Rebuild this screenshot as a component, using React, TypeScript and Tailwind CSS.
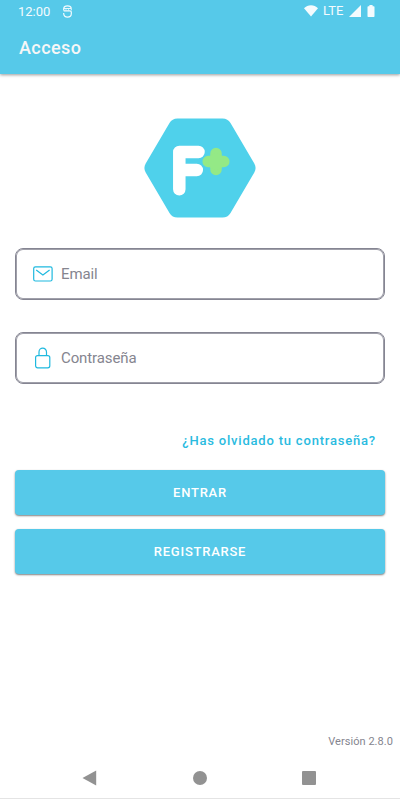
import type { ReactNode } from "react";

function StatusBar() {
  return (
    <div className="flex h-[22px] items-center justify-between pl-[18px] pr-[25px] text-[#f4fbfe]">
      <div className="flex items-center">
        <span className="w-[45px] pt-px text-[13px] leading-[22px]">12:00</span>
        <svg width="9" height="13" viewBox="0 0 9 13" fill="none" stroke="currentColor">
          <path d="M.7 5.600V3.500C.9 1.800 2.300.8 4.500.8s3.600 1 3.800 2.700M.7 5.900h6.100c.9 0 1.500.4 1.500 1.200v1.700c0 2-1.600 3.300-3.800 3.300S.7 10.800.7 8.800v-.9" strokeWidth="1.200" />
          <path d="M1 3.500h7.300v1.800M3 4.300v1M5.500 4.300v1" strokeWidth=".9" />
        </svg>
      </div>
      <div className="flex items-center">
        <svg width="14" height="12" viewBox="0 0 14 12" fill="currentColor">
          <path d="M7 11.600 0 3.300C2 1.200 4.300.2 7 .2s5 1 7 3.100z" />
        </svg>
        <span className="ml-[5px] w-[22px] text-[13px] leading-[22px]">LTE</span>
        <svg className="ml-1" width="12" height="12" viewBox="0 0 12 12" fill="currentColor">
          <path d="M12 0v12H0z" />
        </svg>
        <svg className="ml-[6px]" width="8" height="12" viewBox="0 0 8 12" fill="currentColor">
          <path d="M2.400 0h3.200v1.200h1.200c.4 0 .7.3.7.7v9.400c0 .4-.3.7-.7.7H1.200c-.4 0-.7-.3-.7-.7V1.900c0-.4.3-.7.7-.7h1.200z" />
        </svg>
      </div>
    </div>
  );
}

function Logo() {
  return (
    <svg width="112" height="100" viewBox="0 0 112 100">
      <path
        d="M33.500.5h45c3.600 0 6.200 1.500 8 4.600l23.800 40.400c1.700 3 1.700 6 0 9L86.500 94.900c-1.800 3.100-4.400 4.600-8 4.600h-45c-3.600 0-6.200-1.500-8-4.600L1.700 54.500c-1.700-3-1.700-6 0-9L25.500 5.100c1.800-3.100 4.400-4.600 8-4.600z"
        fill="#4fd1eb"
      />
      <path
        d="M35.300 34h19.200M35.300 52h17.500M35.300 34v37.300"
        fill="none"
        stroke="#fff"
        strokeWidth="12.500"
        strokeLinecap="round"
        strokeLinejoin="round"
      />
      <path d="M72 35.500v16M64.200 43.500h15.600" stroke="#94e986" strokeWidth="11.500" strokeLinecap="round" />
      <circle cx="72" cy="43.500" r="8" fill="#94e986" />
    </svg>
  );
}

function Field({ icon, label }: { icon: ReactNode; label: string }) {
  return (
    <div className="flex h-[52px] items-center rounded-[8px] border border-[#858592] pl-[17px] shadow-[inset_0_0_0_1px_#a0a0aa]">
      <div className="flex w-[28px] items-center">{icon}</div>
      <span className="text-[15px] leading-5 tracking-[-0.1px] text-[#85858f]">{label}</span>
    </div>
  );
}

function Button({ children }: { children: ReactNode }) {
  return (
    <button className="h-[45px] w-full rounded-[4px] bg-[#56c9e9] text-[13px] font-medium tracking-[0.75px] text-white shadow-[0_1px_2px_rgba(0,0,0,0.5)]">
      {children}
    </button>
  );
}

export default function App() {
  return (
    <div className="flex h-[800px] w-[400px] flex-col bg-white font-[Roboto,sans-serif]">
      <header className="h-[74px] shrink-0 bg-[#56c9e9] shadow-[0_1px_3px_rgba(0,0,0,0.4)]">
        <StatusBar />
        <h1 className="pl-[19px] pt-[14px] text-[18px] font-medium leading-6 tracking-[0.4px] text-[#f7f7f7]">
          Acceso
        </h1>
      </header>

      <main className="flex flex-1 flex-col px-[15px]">
        <div className="flex justify-center pt-[44px]">
          <Logo />
        </div>

        <div className="mt-[30px] flex flex-col gap-[32px]">
          <Field
            label="Email"
            icon={
              <svg width="20" height="16" viewBox="0 0 20 16" fill="none" stroke="#1fb9df" strokeWidth="1.200">
                <rect x=".7" y=".8" width="18.400" height="14.200" rx="1.800" />
                <path d="m3.200 4 6.700 5L16.600 4" />
              </svg>
            }
          />
          <Field
            label="Contraseña"
            icon={
              <svg width="20" height="22" viewBox="0 0 20 22" fill="none" stroke="#1fb9df" strokeWidth="1.200">
                <rect x="2.600" y="8.600" width="14.200" height="12.200" rx="2" />
                <path d="M6 8.600V4.900a3.750 3.750 0 0 1 7.500 0v3.700" />
              </svg>
            }
          />
        </div>

        <a className="mt-[47px] self-end pr-[9px] text-[13px] font-medium leading-5 tracking-[0.8px] text-[#2abbdf]">
          ¿Has olvidado tu contraseña?
        </a>

        <div className="mt-[19px] flex flex-col gap-[14px]">
          <Button>ENTRAR</Button>
          <Button>REGISTRARSE</Button>
        </div>
      </main>

      <footer>
        <p className="pr-[7px] text-right text-[11px] leading-4 tracking-[0.05px] text-[#85858f]">Versión 2.8.0</p>
        <nav className="flex h-[48px] items-center justify-between pl-[82px] pr-[84px] pt-[8px]">
          <svg width="15" height="16" viewBox="0 0 15 16" fill="#929292">
            <path d="M14.200.5v15L.5 8z" />
          </svg>
          <div className="size-[14px] rounded-full bg-[#929292]" />
          <div className="size-[14px] rounded-[1px] bg-[#929292]" />
        </nav>
        <div className="mb-px h-px bg-[#e4e4e4]" />
      </footer>
    </div>
  );
}
